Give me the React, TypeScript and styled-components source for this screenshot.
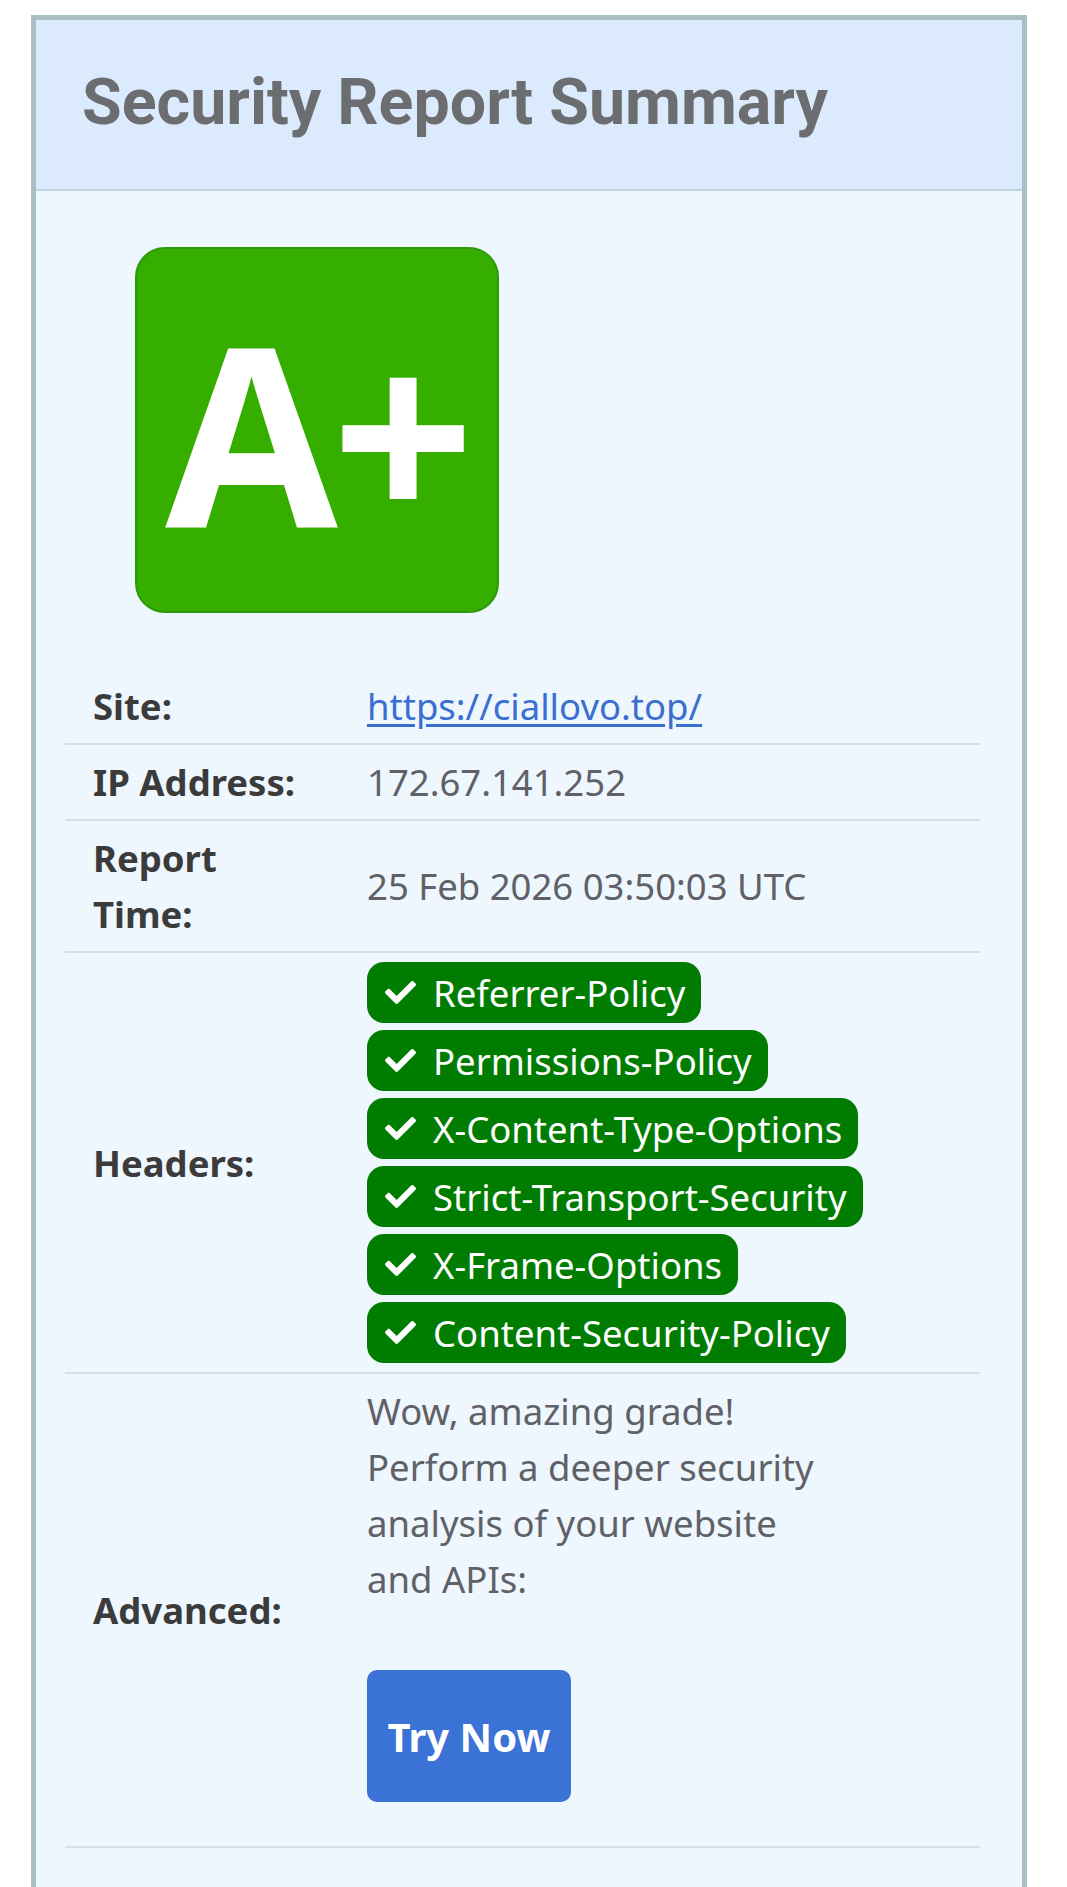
import React from "react";
import styled, { createGlobalStyle } from "styled-components";
import { FaCheck } from "react-icons/fa";

const GlobalStyle = createGlobalStyle`
  body {
    margin: 0;
    background: #ffffff;
    font-family: "Noto Sans", "Open Sans", sans-serif;
  }
`;

const Card = styled.div`
  margin: 15px 40px 0 31px;
  border: 5px solid #a8c0c4;
  background: #eef6fe;
`;

const Header = styled.div`
  background: #dbeafc;
  border-bottom: 2px solid #bfd3de;
  padding: 43px 46px 47px;
`;

const Title = styled.h1`
  margin: 0;
  font-family: Roboto, "Liberation Sans", sans-serif;
  font-weight: 700;
  font-size: 64.5px;
  line-height: 79px;
  color: #6b6d71;
`;

const Body = styled.div`
  padding: 56px 42px 120px 29px;
`;

const Grade = styled.div`
  width: 360px;
  height: 362px;
  margin-left: 70px;
  margin-bottom: 56px;
  box-sizing: content-box;
  border: 2px solid #2c9a08;
  border-radius: 30px;
  background: #36ae00;
  color: #ffffff;
  display: flex;
  align-items: center;
  justify-content: center;
  font-family: "Open Sans", "Noto Sans", sans-serif;
  font-weight: 700;
  font-size: 250px;
  line-height: 1;
  letter-spacing: -6px;
`;

const Table = styled.table`
  width: 100%;
  border-collapse: collapse;
  font-size: 36.5px;
  line-height: 56px;
`;

const Row = styled.tr`
  border-bottom: 2px solid #dadfe4;
`;

const Label = styled.th`
  width: 215px;
  padding: 9px 59px 9px 28px;
  text-align: left;
  vertical-align: middle;
  font-weight: 700;
  color: #3b3b3b;
`;

const Value = styled.td`
  padding: 9px 0;
  vertical-align: middle;
  color: #5f6166;
`;

const Link = styled.a`
  color: #3a6fd0;
  text-decoration: underline;
  text-underline-offset: 4px;
`;

const Badges = styled.div`
  display: flex;
  flex-direction: column;
  align-items: flex-start;
  gap: 7px;
`;

const Badge = styled.span`
  display: inline-flex;
  align-items: center;
  gap: 17px;
  height: 61px;
  padding: 0 16px 0 18px;
  border-radius: 17px;
  background: #007d00;
  color: #ffffff;
  svg {
    width: 31px;
    height: 31px;
  }
`;

const Blurb = styled.p`
  margin: 0;
  max-width: 470px;
`;

const Button = styled.button`
  display: block;
  margin: 63px 0 35px;
  width: 204px;
  height: 132px;
  border: none;
  border-radius: 10px;
  background: #3b72d6;
  color: #ffffff;
  font-family: "Noto Sans", "Open Sans", sans-serif;
  font-weight: 700;
  font-size: 40px;
  padding: 0;
  cursor: pointer;
`;

const headers = [
  "Referrer-Policy",
  "Permissions-Policy",
  "X-Content-Type-Options",
  "Strict-Transport-Security",
  "X-Frame-Options",
  "Content-Security-Policy",
];

const App = () => {
  return (
    <>
      <GlobalStyle />
      <Card>
        <Header>
          <Title>Security Report Summary</Title>
        </Header>
        <Body>
          <Grade>A+</Grade>
          <Table>
            <tbody>
              <Row>
                <Label>Site:</Label>
                <Value>
                  <Link href="#">https://ciallovo.top/</Link>
                </Value>
              </Row>
              <Row>
                <Label>IP Address:</Label>
                <Value>172.67.141.252</Value>
              </Row>
              <Row>
                <Label>Report Time:</Label>
                <Value>25 Feb 2026 03:50:03 UTC</Value>
              </Row>
              <Row>
                <Label>Headers:</Label>
                <Value>
                  <Badges>
                    {headers.map((h) => (
                      <Badge key={h}>
                        <FaCheck />
                        {h}
                      </Badge>
                    ))}
                  </Badges>
                </Value>
              </Row>
              <Row>
                <Label>Advanced:</Label>
                <Value>
                  <Blurb>
                    Wow, amazing grade!
                    <br />
                    Perform a deeper security analysis of your website and APIs:
                  </Blurb>
                  <Button>Try Now</Button>
                </Value>
              </Row>
            </tbody>
          </Table>
        </Body>
      </Card>
    </>
  );
};

export default App;
